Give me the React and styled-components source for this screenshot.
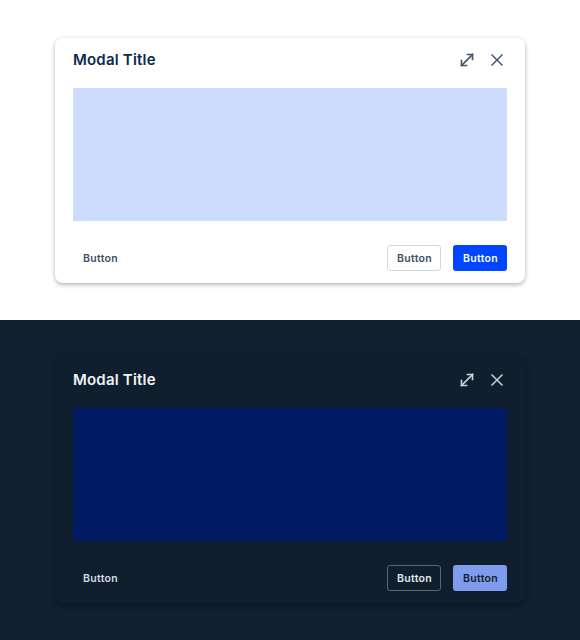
import React from "react";
import styled, { createGlobalStyle, css } from "styled-components";

const GlobalStyle = createGlobalStyle`
  body {
    margin: 0;
    font-family: "Inter", "Open Sans", sans-serif;
  }
`;

const themes = {
  light: {
    page: "#ffffff",
    card: "#ffffff",
    shadow: "0 2px 4px rgba(0,0,0,0.25), 0 0 6px rgba(0,0,0,0.06)",
    title: "#0c2a4a",
    icon: "#44586f",
    body: "#cddbfe",
    ghost: "#3d5066",
    outlineBorder: "#d3d9e1",
    outlineText: "#3d5066",
    primaryBg: "#0045ff",
    primaryText: "#ffffff",
  },
  dark: {
    page: "#10202f",
    card: "#0f1f2d",
    shadow: "0 2px 6px rgba(0,0,0,0.3)",
    title: "#f1f3f5",
    icon: "#c9d0d8",
    body: "#001a63",
    ghost: "#d5dbe2",
    outlineBorder: "#5b6774",
    outlineText: "#e3e7ec",
    primaryBg: "#7f9cec",
    primaryText: "#0f1f2e",
  },
};

const Section = styled.div`
  height: 320px;
  background: ${({ t }) => t.page};
  padding-top: ${({ top }) => top}px;
  box-sizing: border-box;
`;

const Card = styled.div`
  width: 470px;
  margin-left: 55px;
  box-sizing: border-box;
  background: ${({ t }) => t.card};
  border-radius: 8px;
  box-shadow: ${({ t }) => t.shadow};
  padding: 0 18px 12px;
`;

const Header = styled.div`
  height: 50px;
  display: flex;
  align-items: center;
  justify-content: space-between;
  padding-bottom: 7px;
  box-sizing: border-box;
`;

const Title = styled.h2`
  margin: 0;
  font-size: 15px;
  font-weight: 600;
  letter-spacing: 0.2px;
  color: ${({ t }) => t.title};
`;

const Icons = styled.div`
  display: flex;
  gap: 14px;
  align-items: center;
  margin-right: 2px;
  color: ${({ t }) => t.icon};
`;

const IconBtn = styled.span`
  display: flex;
  width: 16px;
  height: 16px;
`;

const Body = styled.div`
  height: 133px;
  background: ${({ t }) => t.body};
`;

const Footer = styled.div`
  display: flex;
  align-items: center;
  margin-top: 24px;
  gap: 12px;
`;

const Spacer = styled.div`
  flex: 1;
`;

const Button = styled.button`
  height: 26px;
  padding: 0 9px;
  border-radius: 3px;
  font-family: inherit;
  font-size: 10.5px;
  font-weight: 600;
  letter-spacing: 0.3px;
  border: 1px solid transparent;
  background: transparent;
  ${({ variant, t }) =>
    variant === "ghost" &&
    css`
      color: ${t.ghost};
    `}
  ${({ variant, t }) =>
    variant === "outline" &&
    css`
      color: ${t.outlineText};
      border-color: ${t.outlineBorder};
      width: 54px;
    `}
  ${({ variant, t }) =>
    variant === "primary" &&
    css`
      color: ${t.primaryText};
      background: ${t.primaryBg};
      width: 54px;
    `}
`;

const ExpandIcon = () => (
  <svg width="16" height="16" viewBox="0 0 16 16" fill="none" stroke="currentColor" strokeWidth="1.7" strokeLinecap="square">
    <path d="M2.5 13.5L13.5 2.5" />
    <path d="M8.5 2.5H13.5V7.5" />
    <path d="M2.5 8.5V13.5H7.5" />
  </svg>
);

const CloseIcon = () => (
  <svg width="16" height="16" viewBox="0 0 16 16" fill="none" stroke="currentColor" strokeWidth="1.5">
    <path d="M2.5 2.5L13.5 13.5M13.5 2.5L2.5 13.5" />
  </svg>
);

function Modal({ t }) {
  return (
    <Card t={t}>
      <Header>
        <Title t={t}>Modal Title</Title>
        <Icons t={t}>
          <IconBtn>
            <ExpandIcon />
          </IconBtn>
          <IconBtn>
            <CloseIcon />
          </IconBtn>
        </Icons>
      </Header>
      <Body t={t} />
      <Footer>
        <Button t={t} variant="ghost">Button</Button>
        <Spacer />
        <Button t={t} variant="outline">Button</Button>
        <Button t={t} variant="primary">Button</Button>
      </Footer>
    </Card>
  );
}

export default function App() {
  return (
    <>
      <GlobalStyle />
      <Section t={themes.light} top={38}>
        <Modal t={themes.light} />
      </Section>
      <Section t={themes.dark} top={38}>
        <Modal t={themes.dark} />
      </Section>
    </>
  );
}
